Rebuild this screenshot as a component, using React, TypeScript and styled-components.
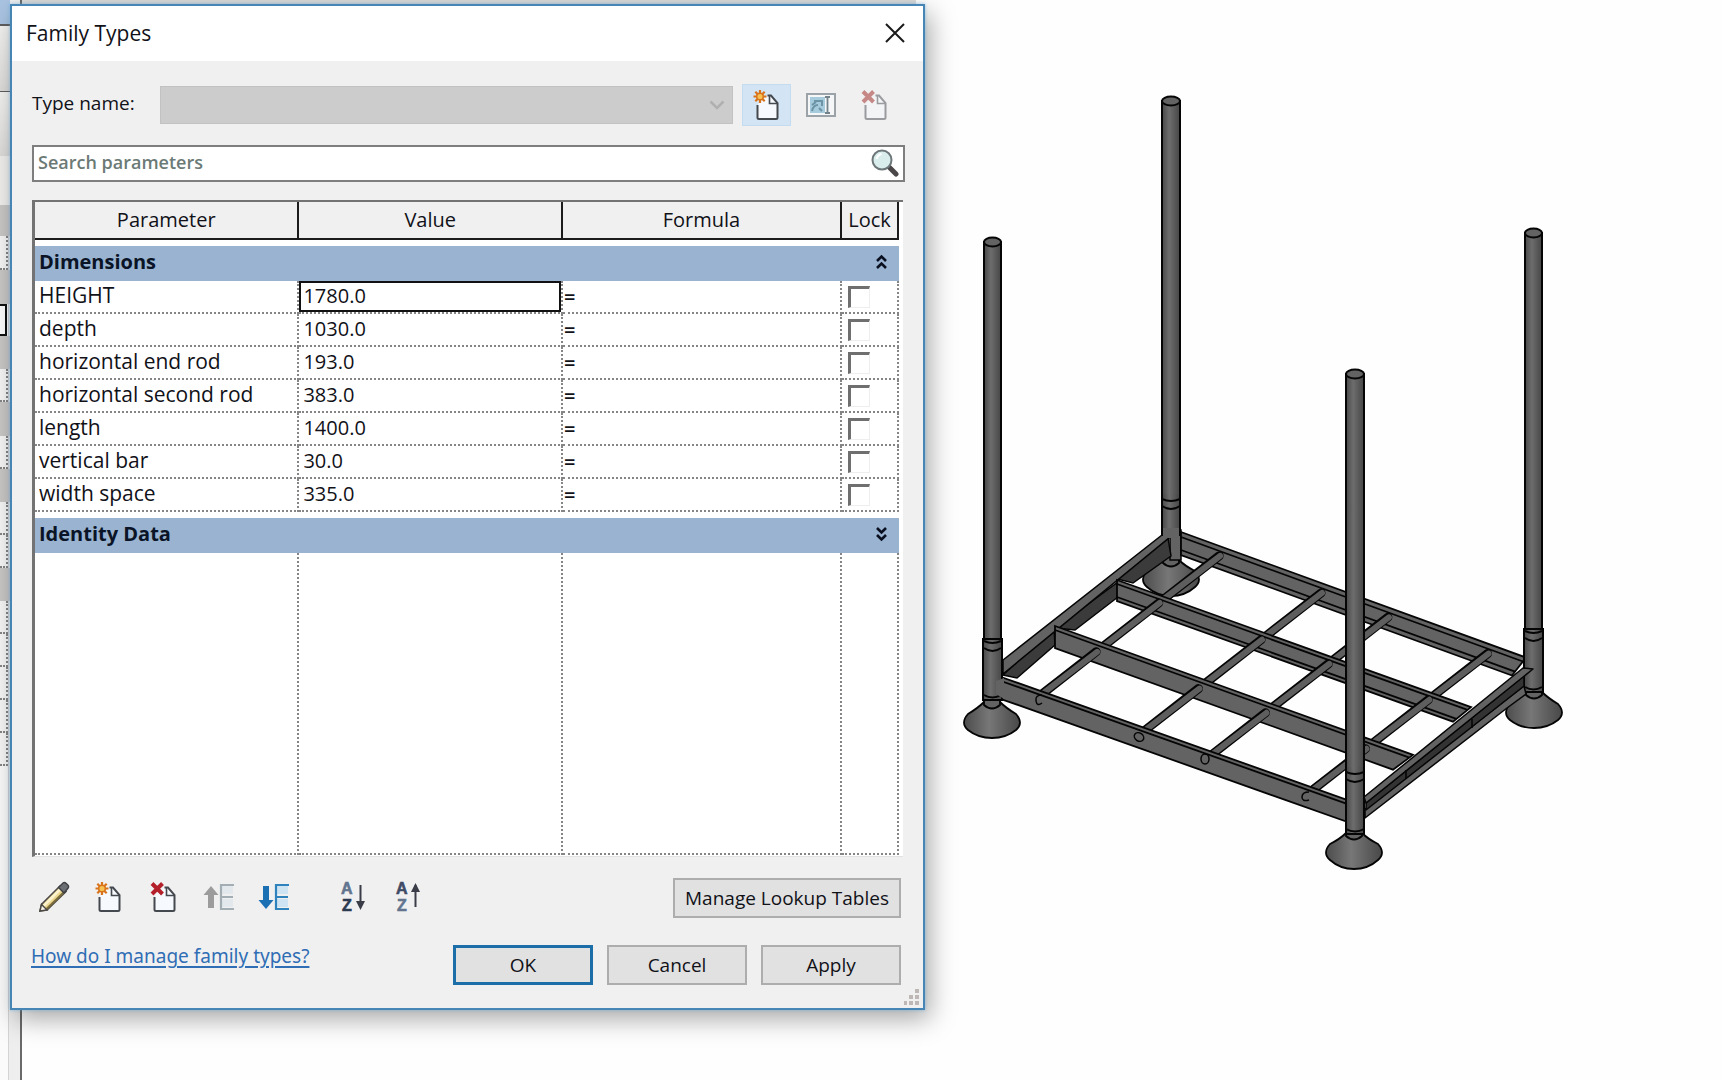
import React, { useState } from "react";
import styled, { createGlobalStyle } from "styled-components";

const GlobalStyle = createGlobalStyle`
  *, *::before, *::after { box-sizing: border-box; }
  body {
    margin: 0;
    background: #fefefe;
    color: #111118;
    font-family: "Open Sans", "Noto Sans", sans-serif;
    font-size: 20px;
    line-height: 28px;
  }
  button, input, select { font: inherit; color: inherit; margin: 0; }
`;

const DOTTED = "2px dotted #858585";

/* ---------- Desktop ---------- */

const Desktop = styled.main`
  display: flex;
  align-items: stretch;
  min-height: 100vh;
  overflow: hidden;
`;

const Palette = styled.div`
  flex: none;
  width: 22px;
  display: flex;
  flex-direction: column;
  border-right: 2px solid #6a6a6a;
  background: linear-gradient(90deg, #fbfbfb 8px, #d4d4d4 8px, #d4d4d4 9px, #eeeeee 9px);
`;

type StripKind = "title" | "line" | "fade" | "plain" | "group" | "row" | "active";

const stripFill: Record<StripKind, string> = {
  title: "#a9c4e2",
  line: "#5f5f5f",
  fade: "linear-gradient(#f4f4f2, #dddcda)",
  plain: "#f1f0ee",
  group: "#c9c8c7",
  row: "#f7f7f7",
  active: "#ffffff",
};

const Strip = styled.div<{ $kind: StripKind; $height: number }>`
  flex: none;
  width: ${(p) => (p.$kind === "active" ? 7 : p.$kind === "row" ? 8 : 10)}px;
  height: ${(p) => p.$height}px;
  background: ${(p) => stripFill[p.$kind]};
  border-right: ${(p) => (p.$kind === "row" ? DOTTED : p.$kind === "active" ? "2px solid #111" : "none")};
  border-bottom: ${(p) => (p.$kind === "row" ? DOTTED : p.$kind === "active" ? "2px solid #111" : "none")};
  border-top: ${(p) => (p.$kind === "active" ? "2px solid #111" : "none")};
`;

const DialogDock = styled.div`
  flex: 0 1 915px;
  min-width: 640px;
  margin-left: -12px;
  padding-top: 4px;
  z-index: 1;
  background: linear-gradient(#dddcdb, #dddcdb) 12px 0 / 894px 4px no-repeat;
`;

const Dialog = styled.section`
  display: flex;
  flex-direction: column;
  border: 2px solid #4785b5;
  background: #f0f0f0;
  box-shadow: 0 0 3px rgba(90, 170, 230, 0.6), 5px 9px 24px rgba(0, 0, 0, 0.34);
`;

const TitleBar = styled.header`
  display: flex;
  align-items: center;
  justify-content: space-between;
  height: 55px;
  padding: 0 13px 2px 14px;
  background: #ffffff;
`;

const Title = styled.h1`
  margin: 0;
  font-size: 21px;
  line-height: 28px;
  font-weight: 400;
`;

const IconButton = styled.button<{ $width: number; $active?: boolean }>`
  flex: none;
  display: flex;
  align-items: center;
  justify-content: center;
  width: ${(p) => p.$width}px;
  height: 42px;
  padding: 0;
  border: 1px solid ${(p) => (p.$active ? "#c3dcf0" : "transparent")};
  background: ${(p) => (p.$active ? "#d3e5f4" : "transparent")};
`;

const Body = styled.div`
  display: flex;
  flex-direction: column;
  padding: 23px 18px 24px 20px;
`;

/* ---------- Type selector and search ---------- */

const TypeRow = styled.div`
  display: flex;
  align-items: center;
  padding-right: 6px;
`;

const TypeLabel = styled.label`
  flex: none;
  width: 128px;
  padding-bottom: 4px;
  font-size: 19px;
`;

const SelectBox = styled.div`
  flex: 1;
  display: grid;
  align-items: center;
  margin-right: 9px;

  > * { grid-area: 1 / 1; }
  > svg { justify-self: end; margin-right: 8px; pointer-events: none; }
`;

const Select = styled.select`
  appearance: none;
  width: 100%;
  height: 38px;
  border: 1px solid #c2c2c2;
  border-radius: 0;
  background: #cccccc;
  opacity: 1;
`;

const TypeActions = styled.div`
  display: flex;
  gap: 5px;
`;

const SearchBox = styled.div`
  display: flex;
  align-items: center;
  height: 37px;
  margin-top: 19px;
  padding-right: 4px;
  border: 2px solid #7e7e7e;
  background: #ffffff;
`;

const SearchInput = styled.input`
  flex: 1;
  min-width: 0;
  padding: 0 4px 3px;
  border: 0;
  outline: 0;
  background: transparent;
  font-size: 18px;

  &::placeholder { color: #6c7a76; opacity: 1; font-weight: 600; }
`;

/* ---------- Parameter table ---------- */

const TableFrame = styled.div`
  margin: 18px 2px 0 0;
  padding-right: 4px;
  padding-bottom: 1px;
  border-top: 2px solid #737373;
  border-left: 3px solid #737373;
  border-bottom: 1px solid #e2e2e2;
  background: #ffffff;
`;

const Table = styled.table`
  width: 100%;
  table-layout: fixed;
  border-collapse: separate;
  border-spacing: 0;
`;

const HeadCell = styled.th`
  height: 38px;
  padding: 0;
  border-right: 2px solid #1c1c1c;
  border-bottom: 2px solid #1c1c1c;
  background: #f0f0f0;
  font-weight: 400;
`;

const Spacer = styled.td`
  height: 6px;
  padding: 0;
`;

const GroupCell = styled.th`
  height: 35px;
  padding: 0;
  background: #99b3d1;
`;

const GroupToggle = styled.button`
  display: flex;
  align-items: center;
  justify-content: space-between;
  width: 100%;
  height: 35px;
  padding: 0 12px 4px 4px;
  border: 0;
  background: transparent;
  color: #0a1426;
  font-weight: 700;
`;

const NameCell = styled.th`
  height: 33px;
  padding: 0 0 3px 4px;
  border-right: ${DOTTED};
  border-bottom: ${DOTTED};
  text-align: left;
  font-size: 21px;
  font-weight: 400;
`;

const Cell = styled.td`
  height: 33px;
  padding: 0;
  border-right: ${DOTTED};
  border-bottom: ${DOTTED};
  vertical-align: top;
`;

const ValueInput = styled.input<{ $current: boolean }>`
  display: block;
  width: 100%;
  height: 31px;
  padding: ${(p) => (p.$current ? "0 2px 2px" : "0 4px 2px")};
  border: ${(p) => (p.$current ? "2px solid #111" : "0")};
  border-radius: 0;
  outline: 0;
  background: transparent;
`;

const Formula = styled.div`
  padding: 2px 0 0 1px;
  font-weight: 600;
`;

const LockBox = styled.input`
  appearance: none;
  display: block;
  width: 22px;
  height: 22px;
  margin: 5px 0 0 6px;
  border: 1px solid #eeeeee;
  border-top: 3px solid #6f6f6f;
  border-left: 3px solid #6f6f6f;
  background: #ffffff;
`;

const FillCell = styled.td`
  height: 302px;
  padding: 0;
  border-right: ${DOTTED};
  border-bottom: ${DOTTED};
`;

/* ---------- Bottom controls ---------- */

const ToolRow = styled.div`
  display: flex;
  align-items: center;
  justify-content: space-between;
  margin: 19px 4px 0 2px;
`;

const ToolGroup = styled.div`
  display: flex;
  gap: 15px;

  & + & { margin-left: 24px; }
`;

const Tools = styled.div`
  display: flex;
  gap: 15px;
  padding-bottom: 2px;
`;

const PushButton = styled.button<{ $width: number; $primary?: boolean }>`
  width: ${(p) => p.$width}px;
  height: 40px;
  padding: 0;
  border: ${(p) => (p.$primary ? "3px solid #1c6ea8" : "2px solid #adadad")};
  background: #e1e1e1;
  font-size: 19px;
  white-space: nowrap;
`;

const Footer = styled.footer`
  display: flex;
  align-items: flex-start;
  justify-content: space-between;
  margin: 25px 4px 0 -1px;
`;

const HelpLink = styled.a`
  color: #2f6db5;
  font-family: "Noto Sans", sans-serif;
  font-size: 19px;
  line-height: 22px;
  text-decoration: underline;
  text-decoration-thickness: 2px;
  text-underline-offset: 3px;
`;

const FooterButtons = styled.div`
  display: flex;
  gap: 14px;
`;

const Grip = styled.svg`
  display: block;
  align-self: flex-end;
  margin: -20px 3px 3px 0;
`;

const Viewport = styled.section`
  flex: 1;
  min-width: 0;
  padding: 80px 15px;
`;

const ModelSvg = styled.svg`
  display: block;
  width: 660px;
  max-width: 100%;
`;

/* ---------- Icons ---------- */

const CloseIcon = () => (
  <svg width="20" height="20" viewBox="0 0 20 20" aria-hidden="true">
    <path d="M1 1 19 19M19 1 1 19" stroke="#1a1a1a" strokeWidth="2" fill="none" />
  </svg>
);

const SelectArrow = () => (
  <svg width="16" height="10" viewBox="0 0 16 10" aria-hidden="true">
    <path d="M1.5 1.5 8 8l6.500-6.500" stroke="#b0b0b0" strokeWidth="2.500" fill="none" />
  </svg>
);

const Page = ({ faded }: { faded?: boolean }) => (
  <g opacity={faded ? 0.5 : 1}>
    <path d="M5 14V29h20V13l-6-7h-5" fill="#f6f9fd" />
    <path d="M4.500 15V27.500q0 1.500 1.500 1.500H23q1.500 0 1.500-1.500V13L18 5.500H14.500" fill="none" stroke="#44484f" strokeWidth="2" />
    <path d="M16.500 6v7.500H24" fill="none" stroke="#44484f" strokeWidth="1.600" />
  </g>
);

const NewIcon = () => (
  <svg width="28" height="31" viewBox="0 0 28 31" aria-hidden="true">
    <Page />
    <g stroke="#d9731a" strokeWidth="2.200">
      <path d="M7 0v13M.5 6.500h13M2.300 1.800l9.400 9.400M11.700 1.800 2.300 11.200" />
    </g>
    <circle cx="7" cy="6.500" r="3.300" fill="#f6c254" stroke="#d9731a" strokeWidth="1.500" />
  </svg>
);

const DeleteIcon = ({ faded }: { faded?: boolean }) => (
  <svg width="28" height="31" viewBox="0 0 28 31" aria-hidden="true">
    <Page faded={faded} />
    <path d="M2 1.500 12.500 12M12.500 1.500 2 12" stroke={faded ? "#c58886" : "#b3202a"} strokeWidth="4" />
  </svg>
);

const RenameIcon = () => (
  <svg width="30" height="26" viewBox="0 0 30 26" aria-hidden="true">
    <rect x="1" y="2" width="28" height="22" fill="#f4f6f7" stroke="#9ba2a8" strokeWidth="2" />
    <path d="M4 5h15v16H4z" fill="#a5cbdc" />
    <path d="M6 19c1-5 3-6 6-6M8 9h7M13 16l3 3M16 8v6M6 13l4-3" stroke="#6d93a6" strokeWidth="2" fill="none" />
    <path d="M19 5h5M21.500 5v16M19 21h5" stroke="#74828b" strokeWidth="1.800" fill="none" />
  </svg>
);

const SearchIcon = () => (
  <svg width="28" height="29" viewBox="0 0 28 29" aria-hidden="true">
    <path d="M17.500 17.500 25 25" stroke="#4b4648" strokeWidth="5" strokeLinecap="round" />
    <circle cx="11" cy="11" r="9.500" fill="#d9eeec" stroke="#6d7779" strokeWidth="2" />
    <path d="M5.500 10q1-4 5-5" stroke="#ffffff" strokeWidth="2" fill="none" />
  </svg>
);

const DoubleChevron = ({ open }: { open: boolean }) => (
  <svg width="11" height="16" viewBox="0 0 11 16" aria-hidden="true">
    <path
      d={open ? "M1 7 5.500 2.500 10 7M1 14 5.500 9.500 10 14" : "M1 2 5.500 6.500 10 2M1 9 5.500 13.500 10 9"}
      stroke="#0a1020"
      strokeWidth="2.600"
      fill="none"
    />
  </svg>
);

const PencilIcon = () => (
  <svg width="32" height="32" viewBox="0 0 32 32" aria-hidden="true">
    <path d="M2 30 3.500 23.500 22 5l6 5.500L9 29z" fill="#ecd891" stroke="#4d4a45" strokeWidth="1.600" />
    <path d="M5.500 25 23 7.500" stroke="#fbf3cf" strokeWidth="2.500" />
    <path d="M8.500 28 26 11" stroke="#7c6d3c" strokeWidth="2" />
    <path d="M20.500 6.500 25 2q1.500-1 3 .3l2 2q1.200 1.500 0 3L26 12z" fill="#6b6e73" stroke="#3d3f43" strokeWidth="1.400" />
    <path d="M2 30 3.500 23.500 9 29z" fill="#f8f4ea" stroke="#4d4a45" strokeWidth="1.400" />
  </svg>
);

const MoveIcon = ({ down }: { down?: boolean }) => {
  const arrow = down ? "#1b6fb3" : "#9c9c9c";
  return (
    <svg width="32" height="30" viewBox="0 0 32 30" aria-hidden="true">
      <path d={down ? "M5 4h6v14h4.500L8 27 .5 18H5z" : "M5 26h6V13h4.500L8 4 .5 13H5z"} fill={arrow} />
      <path d="M19 4h11v8H19zM19 17h11v8H19z" fill={down ? "#cfe4f3" : "#e2e8ec"} />
      <path d="M31 3H18v24h13M18 15h12" fill="none" stroke={down ? "#2f83bd" : "#a3adb4"} strokeWidth="2.200" />
    </svg>
  );
};

const SortLetter = styled.text`
  font-family: "Liberation Sans", sans-serif;
  font-size: 16px;
  font-weight: 700;
`;

const SortIcon = ({ up }: { up?: boolean }) => (
  <svg width="26" height="40" viewBox="0 0 26 40" aria-hidden="true">
    <SortLetter x="1" y="17" fill={up ? "#3f4a66" : "#62748e"} stroke={up ? "#3f4a66" : "#62748e"} strokeWidth="0.600">A</SortLetter>
    <SortLetter x="2" y="34" fill={up ? "#62748e" : "#2c3a50"} stroke={up ? "#62748e" : "#2c3a50"} strokeWidth="0.600">Z</SortLetter>
    <path d="M20.500 8v22" stroke="#3a3d48" strokeWidth="2" />
    <path d={up ? "M20.500 6l4.500 9h-9z" : "M20.500 33l4.500-9h-9z"} fill="#3a3d48" />
  </svg>
);

/* ---------- 3D model of the rack ---------- */

const INK = "#050505";
const STEEL = "#636363";

type Point = [number, number];
const pts = (list: Point[]) => list.map((p) => p.join(",")).join(" ");

type BeamSpec = { x1: number; y1: number; x2: number; slope: number; depth: number; lines: number[]; cut: number };

const Beam = ({ x1, y1, x2, slope, depth, lines, cut }: BeamSpec) => {
  const y2 = y1 + slope * (x2 - x1);
  const xb = x2 - cut;
  const yb = y1 + depth + slope * (xb - x1);
  return (
    <g stroke={INK} strokeWidth="1.800">
      <polygon points={pts([[x1, y1], [x2, y2], [xb, yb], [x1, y1 + depth]])} fill={STEEL} />
      {lines.map((o) => {
        const xe = x2 - (cut * o) / depth;
        return <line key={o} x1={x1} y1={y1 + o} x2={xe} y2={y1 + o + slope * (xe - x1)} />;
      })}
    </g>
  );
};

const backBeam: BeamSpec = { x1: 1181, y1: 532, x2: 1526, slope: 0.364, depth: 23, lines: [5, 18], cut: 14 };
const upperBeam: BeamSpec = { x1: 1117, y1: 580, x2: 1471, slope: 0.359, depth: 21, lines: [4, 17], cut: 18 };
const lowerBeam: BeamSpec = { x1: 1055, y1: 626, x2: 1413, slope: 0.36, depth: 22, lines: [4], cut: 20 };
const frontBeam: BeamSpec = { x1: 1001, y1: 677, x2: 1347, slope: 0.355, depth: 22, lines: [4], cut: 0 };

const ROD_SLOPE = 0.78;
const rodHeads: Point[] = [[1219, 556], [1321, 593], [1387, 618], [1487, 654]];

const meet = ([rx, ry]: Point, beam: BeamSpec, offset: number): Point => {
  const x = (ry + ROD_SLOPE * rx - beam.y1 - offset + beam.slope * beam.x1) / (beam.slope + ROD_SLOPE);
  return [x, beam.y1 + offset + beam.slope * (x - beam.x1)];
};

const Rods = ({ from, to, inset }: { from: BeamSpec; to: BeamSpec; inset: number }) => (
  <g strokeLinecap="round">
    {rodHeads.map((head) => {
      const [ax, ay] = meet(head, from, inset);
      const [bx, by] = meet(head, to, 4);
      return (
        <g key={head[0]}>
          <line x1={ax} y1={ay} x2={bx} y2={by} stroke={INK} strokeWidth="9" />
          <line x1={ax + 1} y1={ay} x2={bx} y2={by} stroke="#5e5e5e" strokeWidth="6" />
        </g>
      );
    })}
  </g>
);

const Foot = ({ cx, top, wide, bottom }: { cx: number; top: number; wide: number; bottom: number }) => (
  <g stroke={INK} strokeWidth="1.800">
    <path
      d={`M${cx - 8} ${top}Q${cx - 14} ${top + 6} ${cx - 24} ${wide - 9}Q${cx - 32} ${wide} ${cx - 24} ${wide + 7}Q${cx - 14} ${bottom} ${cx} ${bottom}Q${cx + 14} ${bottom} ${cx + 24} ${wide + 7}Q${cx + 32} ${wide} ${cx + 24} ${wide - 9}Q${cx + 14} ${top + 6} ${cx + 8} ${top}z`}
      fill="url(#foot)"
    />
    <path d={`M${cx - 8} ${top - 6}V${top + 3}Q${cx} ${top + 10} ${cx + 8} ${top + 3}V${top - 6}z`} fill={STEEL} />
  </g>
);

type PostSpec = { x: number; w: number; top: number; sleeve: number; bottom: number; flare?: number };

const Post = ({ x, w, top, sleeve, bottom, flare = 0 }: PostSpec) => {
  const c = x + w / 2;
  return (
    <g stroke={INK} strokeWidth="2">
      <rect x={x} y={top + 5} width={w} height={sleeve - top} fill="url(#tube)" />
      <rect x={x - flare} y={sleeve - 2} width={w + flare * 2} height={bottom - sleeve} fill="url(#tube)" />
      {flare === 0 && <rect x={x + 1} y={sleeve - 5} width={w - 2} height="6" fill="url(#tube)" stroke="none" />}
      <ellipse cx={c} cy={top + 5} rx={w / 2} ry="4.500" fill={STEEL} />
      <path d={`M${x} ${sleeve}q${w / 2} 4 ${w} 0M${x} ${sleeve + 7}q${w / 2} 6 ${w} 0M${x} ${bottom - 7}q${w / 2} 5 ${w} 0`} fill="none" />
    </g>
  );
};

const RackModel = () => (
  <ModelSvg viewBox="940 80 660 800" role="img" aria-label="3D view of the rack">
    <defs>
      <linearGradient id="tube">
        <stop offset="0" stopColor="#484848" />
        <stop offset="0.4" stopColor="#6d6d6d" />
        <stop offset="1" stopColor="#464646" />
      </linearGradient>
      <linearGradient id="foot">
        <stop offset="0" stopColor="#4c4c4c" />
        <stop offset="0.45" stopColor="#777" />
        <stop offset="1" stopColor="#484848" />
      </linearGradient>
    </defs>

    <Foot cx={1171} top={560} wide={580} bottom={596} />
    <rect x="1170" y="530" width="11" height="30" fill={STEEL} stroke={INK} strokeWidth="1.500" />
    <Beam {...backBeam} />

    <g stroke={INK} strokeWidth="1.500">
      <polygon points="1168,538 1171,556 1133,583 1117,579" fill="#3b3b3b" />
      <polygon points="1118,582 1118,597 1075,630 1056,628" fill="#3b3b3b" />
      <polygon points="1054,628 1055,645 1017,678 1003,675" fill="#3b3b3b" />
      <polygon points="1003,660 1162,535 1170,537 1003,674" fill={STEEL} />
    </g>
    <Post x={1162} w={18} top={96} sleeve={499} bottom={537} />
    <rect x="1163" y="528" width="16" height="10" fill={STEEL} />

    <Rods from={backBeam} to={upperBeam} inset={10} />
    <Beam {...upperBeam} />
    <Rods from={upperBeam} to={lowerBeam} inset={8} />
    <Beam {...lowerBeam} />
    <Rods from={lowerBeam} to={frontBeam} inset={11} />

    <Foot cx={1534} top={692} wide={713} bottom={728} />
    <Post x={1525} w={17} top={228} sleeve={631} bottom={694} flare={1} />
    <g stroke={INK} strokeWidth="1.500" strokeLinejoin="round">
      <polygon points="1365,809 1524,686 1526,694 1507,708 1365,818" fill={STEEL} />
      <polygon points="1366,803 1524,676 1524,686 1366,810" fill="#333" />
      <polygon points="1364,797 1523,668 1533,669 1366,803" fill={STEEL} />
      <path d="M1406 779v-9M1472 728v-9" fill="none" />
    </g>
    <Beam {...frontBeam} />

    <g fill="none" stroke={INK} strokeWidth="1.500">
      <path d="M1042 695q-7 0-6 6t6 2" />
      <ellipse cx="1139" cy="737" rx="5" ry="4" transform="rotate(35 1139 737)" />
      <ellipse cx="1205" cy="759" rx="4" ry="5" />
      <path d="M1309 792q-7 0-7 5t7 3" />
    </g>

    <Foot cx={992} top={702} wide={723} bottom={738} />
    <Post x={984} w={17} top={237} sleeve={641} bottom={702} flare={1} />
    <polygon points="996,681 1004,678 1004,699 996,694" fill={STEEL} />
    <Foot cx={1354} top={833} wide={853} bottom={869} />
    <Post x={1346} w={18} top={369} sleeve={772} bottom={836} />
  </ModelSvg>
);

/* ---------- Data ---------- */

const strips: [StripKind, number][] = [
  ["title", 24], ["line", 2], ["fade", 65], ["line", 1], ["fade", 64], ["plain", 49], ["group", 31],
  ["row", 34], ["group", 34], ["active", 32], ["group", 33], ["row", 33], ["group", 34], ["row", 33],
  ["group", 33], ["row", 33], ["row", 33], ["group", 33], ["row", 33], ["row", 33], ["row", 33],
  ["row", 33], ["row", 33],
];

const parameters = [
  { name: "HEIGHT", value: "1780.0" },
  { name: "depth", value: "1030.0" },
  { name: "horizontal end rod", value: "193.0" },
  { name: "horizontal second rod", value: "383.0" },
  { name: "length", value: "1400.0" },
  { name: "vertical bar", value: "30.0" },
  { name: "width space", value: "335.0" },
];

export default function App() {
  const [open, setOpen] = useState(true);
  const [identityOpen, setIdentityOpen] = useState(false);

  return (
    <>
      <GlobalStyle />
      <Desktop>
        <Palette aria-hidden="true">
          {strips.map(([kind, height], i) => (
            <Strip key={i} $kind={kind} $height={height} />
          ))}
        </Palette>
        <DialogDock>
          <Dialog role="dialog" aria-labelledby="dialog-title">
            <TitleBar>
              <Title id="dialog-title">Family Types</Title>
              <IconButton $width={30} type="button" aria-label="Close"><CloseIcon /></IconButton>
            </TitleBar>
            <Body>
              <TypeRow>
                <TypeLabel htmlFor="type-name">Type name:</TypeLabel>
                <SelectBox>
                  <Select id="type-name" disabled />
                  <SelectArrow />
                </SelectBox>
                <TypeActions>
                  <IconButton $width={49} $active type="button" aria-label="New type"><NewIcon /></IconButton>
                  <IconButton $width={49} type="button" disabled aria-label="Rename type"><RenameIcon /></IconButton>
                  <IconButton $width={49} type="button" disabled aria-label="Delete type"><DeleteIcon faded /></IconButton>
                </TypeActions>
              </TypeRow>

              <SearchBox>
                <SearchInput type="text" placeholder="Search parameters" aria-label="Search parameters" />
                <SearchIcon />
              </SearchBox>

              <TableFrame>
                <Table>
                  <colgroup>
                    <col />
                    <col style={{ width: "30.500%" }} />
                    <col style={{ width: "32.300%" }} />
                    <col style={{ width: 57 }} />
                  </colgroup>
                  <thead>
                    <tr>
                      <HeadCell scope="col">Parameter</HeadCell>
                      <HeadCell scope="col">Value</HeadCell>
                      <HeadCell scope="col">Formula</HeadCell>
                      <HeadCell scope="col">Lock</HeadCell>
                    </tr>
                  </thead>
                  <tbody>
                    <tr><Spacer colSpan={4} /></tr>
                    <tr>
                      <GroupCell colSpan={4}>
                        <GroupToggle type="button" aria-expanded={open} onClick={() => setOpen(!open)}>
                          Dimensions
                          <DoubleChevron open={open} />
                        </GroupToggle>
                      </GroupCell>
                    </tr>
                    {open && parameters.map((p, i) => (
                      <tr key={p.name}>
                        <NameCell scope="row">{p.name}</NameCell>
                        <Cell>
                          <ValueInput $current={i === 0} type="text" defaultValue={p.value} aria-label={`${p.name} value`} />
                        </Cell>
                        <Cell><Formula>=</Formula></Cell>
                        <Cell><LockBox type="checkbox" aria-label={`Lock ${p.name}`} /></Cell>
                      </tr>
                    ))}
                    <tr><Spacer colSpan={4} /></tr>
                    <tr>
                      <GroupCell colSpan={4}>
                        <GroupToggle type="button" aria-expanded={identityOpen} onClick={() => setIdentityOpen(!identityOpen)}>
                          Identity Data
                          <DoubleChevron open={identityOpen} />
                        </GroupToggle>
                      </GroupCell>
                    </tr>
                    <tr>
                      <FillCell /><FillCell /><FillCell /><FillCell />
                    </tr>
                  </tbody>
                </Table>
              </TableFrame>

              <ToolRow>
                <Tools>
                  <ToolGroup>
                    <IconButton $width={40} type="button" aria-label="Edit parameter"><PencilIcon /></IconButton>
                    <IconButton $width={40} type="button" aria-label="New parameter"><NewIcon /></IconButton>
                    <IconButton $width={40} type="button" aria-label="Delete parameter"><DeleteIcon /></IconButton>
                    <IconButton $width={40} type="button" disabled aria-label="Move up"><MoveIcon /></IconButton>
                    <IconButton $width={40} type="button" aria-label="Move down"><MoveIcon down /></IconButton>
                  </ToolGroup>
                  <ToolGroup>
                    <IconButton $width={40} type="button" aria-label="Sort ascending"><SortIcon /></IconButton>
                    <IconButton $width={40} type="button" aria-label="Sort descending"><SortIcon up /></IconButton>
                  </ToolGroup>
                </Tools>
                <PushButton $width={228} type="button">Manage Lookup Tables</PushButton>
              </ToolRow>

              <Footer>
                <HelpLink href="#help">How do I manage family types?</HelpLink>
                <FooterButtons>
                  <PushButton $width={140} $primary type="button">OK</PushButton>
                  <PushButton $width={140} type="button">Cancel</PushButton>
                  <PushButton $width={140} type="button">Apply</PushButton>
                </FooterButtons>
              </Footer>
            </Body>
            <Grip width="16" height="16" viewBox="0 0 16 16" aria-hidden="true">
              <path d="M11 0h4v4h-4zM11 6h4v4h-4zM5 6h4v4H5zM11 12h4v4h-4zM5 12h4v4H5zM0 12h3v4H0z" fill="#bdb8b5" />
            </Grip>
          </Dialog>
        </DialogDock>
        <Viewport>
          <RackModel />
        </Viewport>
      </Desktop>
    </>
  );
}
